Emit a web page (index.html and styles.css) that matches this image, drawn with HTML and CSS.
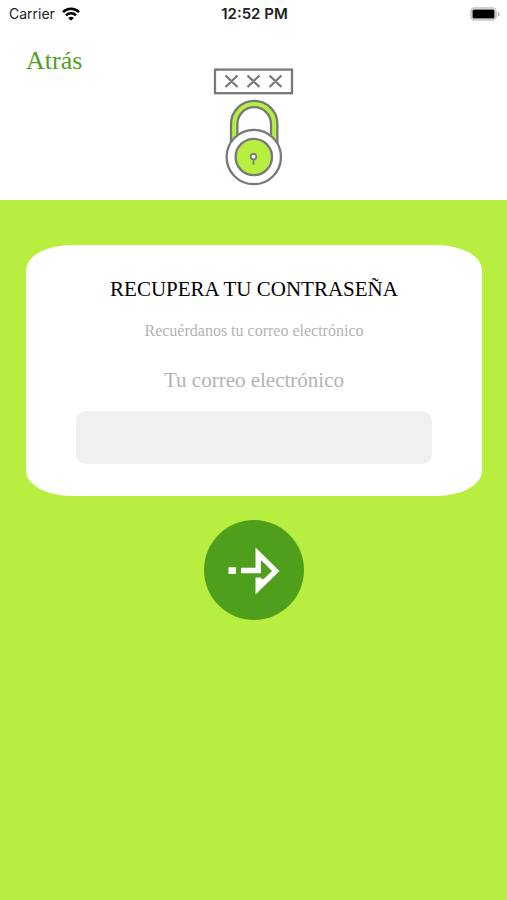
FILE: index.html
```html
<!DOCTYPE html>
<html lang="es">
<head>
<meta charset="utf-8">
<meta name="viewport" content="width=device-width, initial-scale=1">
<title>Recupera tu contraseña</title>
<link rel="stylesheet" href="styles.css">
</head>
<body>
<header class="top">
  <div class="status">
    <div class="carrier">
      <span>Carrier</span>
      <svg width="18" height="14" viewBox="0 0 18 14" aria-hidden="true">
        <g fill="none" stroke="#000" stroke-width="2.6">
          <path d="M1 5.1a11.3 11.3 0 0 1 16 0"/>
          <path d="M4 8.3a7 7 0 0 1 10 0"/>
        </g>
        <path d="M9 13.8 6.2 11a4 4 0 0 1 5.6 0z"/>
      </svg>
    </div>
    <span class="time">12:52 PM</span>
    <svg class="battery" width="30" height="14" viewBox="0 0 30 14" aria-hidden="true">
      <rect x="1" y="1" width="25" height="12" rx="3.5" fill="#fff" stroke="#c4c4c4" stroke-width="1.6"/>
      <rect x="2.5" y="2.5" width="22" height="9" rx="1.5"/>
      <path d="M27.8 5v4.4q1.7-.6 1.7-2.2T27.8 5z" fill="#aaa"/>
    </svg>
  </div>
  <div class="bar">
    <a class="back" href="#">Atrás</a>
    <svg class="logo" width="81" height="118" viewBox="0 0 81 118" aria-hidden="true">
      <g fill="none" stroke="#77787a" stroke-width="2.3">
        <rect x="2" y="1.6" width="77" height="23.6"/>
        <path d="M12.500 7.500l12 11.500M24.500 7.500L12.500 19M34.500 7.500l12 11.500M46.500 7.500L34.500 19M56.500 7.500l12 11.500M68.500 7.500L56.500 19"/>
        <path fill="#b7ee3f" d="M18 84V56a23.200 23.200 0 0 1 46.400 0V84H58V56a16.800 16.800 0 0 0-33.600 0V84z"/>
        <circle cx="40.800" cy="89" r="27.200" fill="#fff"/>
        <circle cx="40.800" cy="89" r="18.200" fill="#b7ee3f"/>
        <circle cx="40.500" cy="88.600" r="2.800" fill="#fff" stroke-width="1.800"/>
        <path d="M40.500 91v5.500" stroke-width="1.800"/>
      </g>
    </svg>
  </div>
</header>
<main>
  <form class="form">
    <section class="card">
      <h1>RECUPERA TU CONTRASEÑA</h1>
      <p>Recuérdanos tu correo electrónico</p>
      <label for="email">Tu correo electrónico</label>
      <input id="email" type="email">
    </section>
    <button class="send" type="button" aria-label="Enviar">
      <svg width="100" height="100" viewBox="0 0 100 100" fill="#fff" aria-hidden="true">
        <path d="M24.500 47.300h7.500V54h-7.500zM37 47.800h14.500V27.500L75.500 51 51.500 74.500V57.500h5.200l1.300 1.800 2-.500 8-7.800L57 40V53.200H37z"/>
      </svg>
    </button>
  </form>
</main>
</body>
</html>
```
FILE: styles.css
```css
* {
  box-sizing: border-box;
}

body {
  margin: 0;
  min-height: 100vh;
  background: #b7ee3f;
  font-family: "Liberation Serif", serif;
}

.top {
  background: #fff;
  padding-bottom: 14px;
}

.status {
  display: grid;
  grid-template-columns: 1fr auto 1fr;
  align-items: center;
  height: 28px;
  padding: 0 7px 0 9px;
  font: 14px/20px Inter, sans-serif;
  color: #222;
}

.carrier {
  display: flex;
  align-items: center;
  gap: 7px;
}

.time {
  font-size: 15px;
  font-weight: 600;
}

.battery {
  justify-self: end;
}

.bar {
  display: grid;
  grid-template-columns: 1fr auto 1fr;
  align-items: start;
  padding: 18px 26px 0;
}

.back {
  color: #4f9f1c;
  font-size: 26px;
  line-height: 30px;
  text-decoration: none;
}

.logo {
  margin-top: 22px;
}

.form {
  display: flex;
  flex-direction: column;
  align-items: center;
  gap: 24px;
  padding: 45px 25px 45px 26px;
}

.card {
  display: flex;
  flex-direction: column;
  align-items: center;
  width: 100%;
  padding: 32px 50px;
  border-radius: 10%;
  background: #fff;
  color: #b3b3b3;
}

h1 {
  margin: 0;
  color: #000;
  font-size: 21px;
  font-weight: 400;
  line-height: 25px;
}

p {
  margin: 20px 0 28px;
  font-size: 16px;
  line-height: 18px;
}

label {
  font-size: 21px;
  line-height: 25px;
}

input {
  width: 100%;
  height: 53px;
  margin-top: 18px;
  padding: 0 16px;
  border: 0;
  border-radius: 10px;
  background: #f1f0ef;
  font: inherit;
}

.send {
  width: 100px;
  height: 100px;
  padding: 0;
  border: 0;
  border-radius: 50%;
  background: #4f9f1c;
}

.send svg {
  display: block;
}
```
